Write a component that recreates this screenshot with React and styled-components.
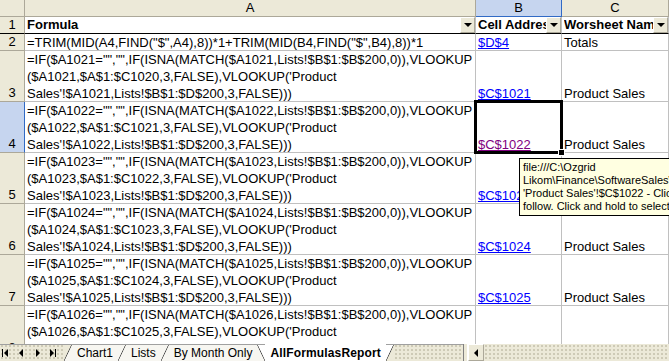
import React from 'react'
import styled, { createGlobalStyle, css } from 'styled-components'

const HEAD_BG = '#ECE9D8'
const HEAD_LINE = '#ACA899'
const GRID = '#C0C0C0'
const SEL_BG = '#C6D5EF'
const SEL_LINE = '#316AC5'

const GlobalStyle = createGlobalStyle`
  html, body {
    margin: 0;
    padding: 0;
    background: #fff;
  }
  body {
    overflow: hidden;
  }
`

const dotted = css`
  background-color: #ECE9D8;
  background-image: radial-gradient(circle, #BDB9A3 0.6px, transparent 0.9px);
  background-size: 4px 4px;
`

const Window = styled.div`
  position: relative;
  width: 669px;
  height: 361px;
  display: flex;
  flex-direction: column;
  overflow: hidden;
  font-family: "Liberation Sans", Arial, sans-serif;
  font-size: 13px;
  color: #000;
`

const Sheet = styled.div`
  flex: 1;
  min-height: 0;
  overflow: hidden;
  display: grid;
  grid-template-columns: 25px 451px 86px 107px;
  grid-template-rows: 17px 17px 17px repeat(6, 51px);
  align-content: start;
`

const Corner = styled.div`
  box-sizing: border-box;
  background: ${HEAD_BG};
  border-right: 1px solid ${HEAD_LINE};
  border-bottom: 1px solid ${HEAD_LINE};
`

const ColHead = styled.div`
  box-sizing: border-box;
  display: flex;
  align-items: center;
  justify-content: center;
  background: ${p => (p.$selected ? SEL_BG : HEAD_BG)};
  border-right: 1px solid ${p => (p.$selected ? SEL_LINE : HEAD_LINE)};
  border-bottom: 1px solid ${p => (p.$selected ? SEL_LINE : HEAD_LINE)};
  line-height: 16px;
`

const RowHead = styled.div`
  box-sizing: border-box;
  display: flex;
  align-items: flex-end;
  justify-content: center;
  background: ${p => (p.$selected ? SEL_BG : HEAD_BG)};
  border-right: 1px solid ${p => (p.$selected ? SEL_LINE : HEAD_LINE)};
  border-bottom: 1px solid ${p => (p.$freeze ? '#000' : HEAD_LINE)};
  line-height: 16px;
`

const Cell = styled.div`
  position: relative;
  box-sizing: border-box;
  display: flex;
  flex-direction: column;
  justify-content: flex-end;
  padding: 0 2px;
  background: #fff;
  border-right: 1px solid ${GRID};
  border-bottom: 1px solid ${p => (p.$freeze ? '#000' : GRID)};
  white-space: nowrap;
  overflow: hidden;
  line-height: 17px;

  & > :last-child {
    margin-bottom: -1px;
  }

  ${p => p.$active && css`
    overflow: visible;

    &::after {
      content: '';
      position: absolute;
      left: -2px;
      top: -2px;
      right: -2px;
      bottom: -2px;
      border: 3px solid #000;
      z-index: 2;
      pointer-events: none;
    }

    &::before {
      content: '';
      position: absolute;
      right: -4px;
      bottom: -4px;
      width: 5px;
      height: 5px;
      background: #000;
      border: 1px solid #fff;
      z-index: 3;
    }
  `}
`

const HeaderCell = styled(Cell)`
  flex-direction: row;
  align-items: stretch;
  padding-right: 0;
  font-weight: 700;
  line-height: 16px;

  & > :last-child {
    margin-bottom: 0;
  }
`

const Label = styled.span`
  flex: 1;
  min-width: 0;
  overflow: hidden;
  align-self: flex-end;
`

const FilterButton = styled.span`
  flex: none;
  box-sizing: border-box;
  width: 15px;
  display: flex;
  align-items: center;
  justify-content: center;
  background: ${HEAD_BG};
  border: 1px solid;
  border-color: #fff ${HEAD_LINE} ${HEAD_LINE} #fff;

  &::after {
    content: '';
    border-left: 4px solid transparent;
    border-right: 4px solid transparent;
    border-top: 4px solid #000;
  }
`

const Line = styled.div``

const Link = styled.span`
  color: ${p => (p.$visited ? '#800080' : '#0000FF')};
  text-decoration: underline;
`

const Tooltip = styled.div`
  position: absolute;
  left: 519px;
  top: 158px;
  width: 170px;
  box-sizing: border-box;
  padding: 2px 3px;
  background: #FFFFE1;
  border: 1px solid #000;
  font-size: 11px;
  line-height: 13px;
  white-space: nowrap;
  overflow: hidden;
  z-index: 5;
`

// ---------------- sheet tabs ----------------

const TabBar = styled.div`
  flex: none;
  height: 17px;
  display: flex;
  font-size: 12px;
`

const NavGroup = styled.div`
  flex: none;
  display: flex;
  width: 64px;
  ${dotted};
  box-shadow: inset 0 1px #A0A0A0;
`

const NavButton = styled.span`
  flex: none;
  width: 16px;
  display: flex;
  align-items: center;
  padding-left: 2px;
  box-sizing: border-box;
`

const Tab = styled.span`
  flex: none;
  display: flex;
  align-items: center;
  padding: 0 5px;
  background: ${p => (p.$active ? '#fff' : '#F7F6F1')};
  font-weight: ${p => (p.$active ? 700 : 400)};
  letter-spacing: ${p => (p.$active ? '0.15px' : 'normal')};
  box-shadow: ${p => (p.$active ? 'none' : 'inset 0 1px #A0A0A0')};
`

const Edge = styled.span`
  flex: none;
  width: 8px;
  background: linear-gradient(
    ${p => (p.$back ? 'to top right' : 'to bottom right')},
    ${p => p.$from} calc(50% - 0.7px),
    #4a4a4a 50%,
    ${p => p.$to} calc(50% + 0.7px)
  );
  box-shadow: inset 0 1px #A0A0A0;
`

const Filler = styled.span`
  flex: 1;
  ${dotted};
  box-shadow: inset 0 1px #A0A0A0;
`

const Splitter = styled.span`
  flex: none;
  width: 3px;
  background: ${HEAD_BG};
  border-left: 1px solid #808080;
  border-right: 1px solid #fff;
`

const ScrollButton = styled.span`
  flex: none;
  box-sizing: border-box;
  width: 16px;
  display: flex;
  align-items: center;
  justify-content: center;
  background: ${HEAD_BG};
  border: 1px solid;
  border-color: #fff #ACA899 #ACA899 #fff;

  &::after {
    content: '';
    border-top: 4px solid transparent;
    border-bottom: 4px solid transparent;
    border-right: 4px solid #000;
  }
`

const Track = styled.span`
  flex: none;
  width: 185px;
  ${dotted};
`

const FirstIcon = () => (
  <svg width="7" height="8" viewBox="0 0 7 8">
    <rect x="0" y="0" width="1" height="8" fill="#000" />
    <polygon points="6,0 6,8 2,4" fill="#000" />
  </svg>
)
const PrevIcon = () => (
  <svg width="7" height="8" viewBox="0 0 7 8">
    <polygon points="5,0 5,8 1,4" fill="#000" />
  </svg>
)
const NextIcon = () => (
  <svg width="7" height="8" viewBox="0 0 7 8">
    <polygon points="2,0 2,8 6,4" fill="#000" />
  </svg>
)
const LastIcon = () => (
  <svg width="7" height="8" viewBox="0 0 7 8">
    <polygon points="0,0 0,8 4,4" fill="#000" />
    <rect x="5" y="0" width="1" height="8" fill="#000" />
  </svg>
)

//================================

const formulaRows = [1021, 1022, 1023, 1024, 1025, 1026].map((k, i) => ({
  n: i + 3,
  lines: [
    `=IF($A${k}="","",IF(ISNA(MATCH($A${k},Lists!$B$1:$B$200,0)),VLOOKUP`,
    `($A${k},$A$1:$C${k - 1},3,FALSE),VLOOKUP('Product`,
    `Sales'!$A${k},Lists!$B$1:$D$200,3,FALSE)))`,
  ],
  link: `$C$${k}`,
  sheet: 'Product Sales',
}))

const TAB_BG = '#F7F6F1'

export default function App() {
  return (
    <Window>
      <GlobalStyle />
      <Sheet>
        <Corner />
        <ColHead>A</ColHead>
        <ColHead $selected>B</ColHead>
        <ColHead>C</ColHead>

        <RowHead $freeze>1</RowHead>
        <HeaderCell $freeze><Label>Formula</Label><FilterButton /></HeaderCell>
        <HeaderCell $freeze><Label>Cell Address</Label><FilterButton /></HeaderCell>
        <HeaderCell $freeze><Label>Worsheet Name</Label><FilterButton /></HeaderCell>

        <RowHead>2</RowHead>
        <Cell><Line>=TRIM(MID(A4,FIND("$",A4),8))*1+TRIM(MID(B4,FIND("$",B4),8))*1</Line></Cell>
        <Cell><Line><Link>$D$4</Link></Line></Cell>
        <Cell><Line>Totals</Line></Cell>

        {formulaRows.map(row => {
          const active = row.n === 4
          return (
            <React.Fragment key={row.n}>
              <RowHead $selected={active}>{row.n}</RowHead>
              <Cell>
                {row.lines.map((l, j) => <Line key={j}>{l}</Line>)}
              </Cell>
              <Cell $active={active}>
                <Line><Link $visited={active}>{row.link}</Link></Line>
              </Cell>
              <Cell><Line>{row.sheet}</Line></Cell>
            </React.Fragment>
          )
        })}
      </Sheet>

      <TabBar>
        <NavGroup>
          <NavButton><FirstIcon /></NavButton>
          <NavButton><PrevIcon /></NavButton>
          <NavButton><NextIcon /></NavButton>
          <NavButton><LastIcon /></NavButton>
        </NavGroup>
        <Edge $from={HEAD_BG} $to={TAB_BG} />
        <Tab>Chart1</Tab>
        <Edge $from={TAB_BG} $to={TAB_BG} />
        <Tab>Lists</Tab>
        <Edge $from={TAB_BG} $to={TAB_BG} />
        <Tab>By Month Only</Tab>
        <Edge $back $from={TAB_BG} $to="#fff" />
        <Tab $active>AllFormulasReport</Tab>
        <Edge $from="#fff" $to={HEAD_BG} />
        <Filler />
        <Splitter />
        <ScrollButton />
        <Track />
      </TabBar>

      <Tooltip>
        <div>file:///C:\Ozgrid</div>
        <div>Likom\Finance\SoftwareSales\Invoices.xls</div>
        <div>'Product Sales'!$C$1022 - Click once to</div>
        <div>follow. Click and hold to select this cell.</div>
      </Tooltip>
    </Window>
  )
}
